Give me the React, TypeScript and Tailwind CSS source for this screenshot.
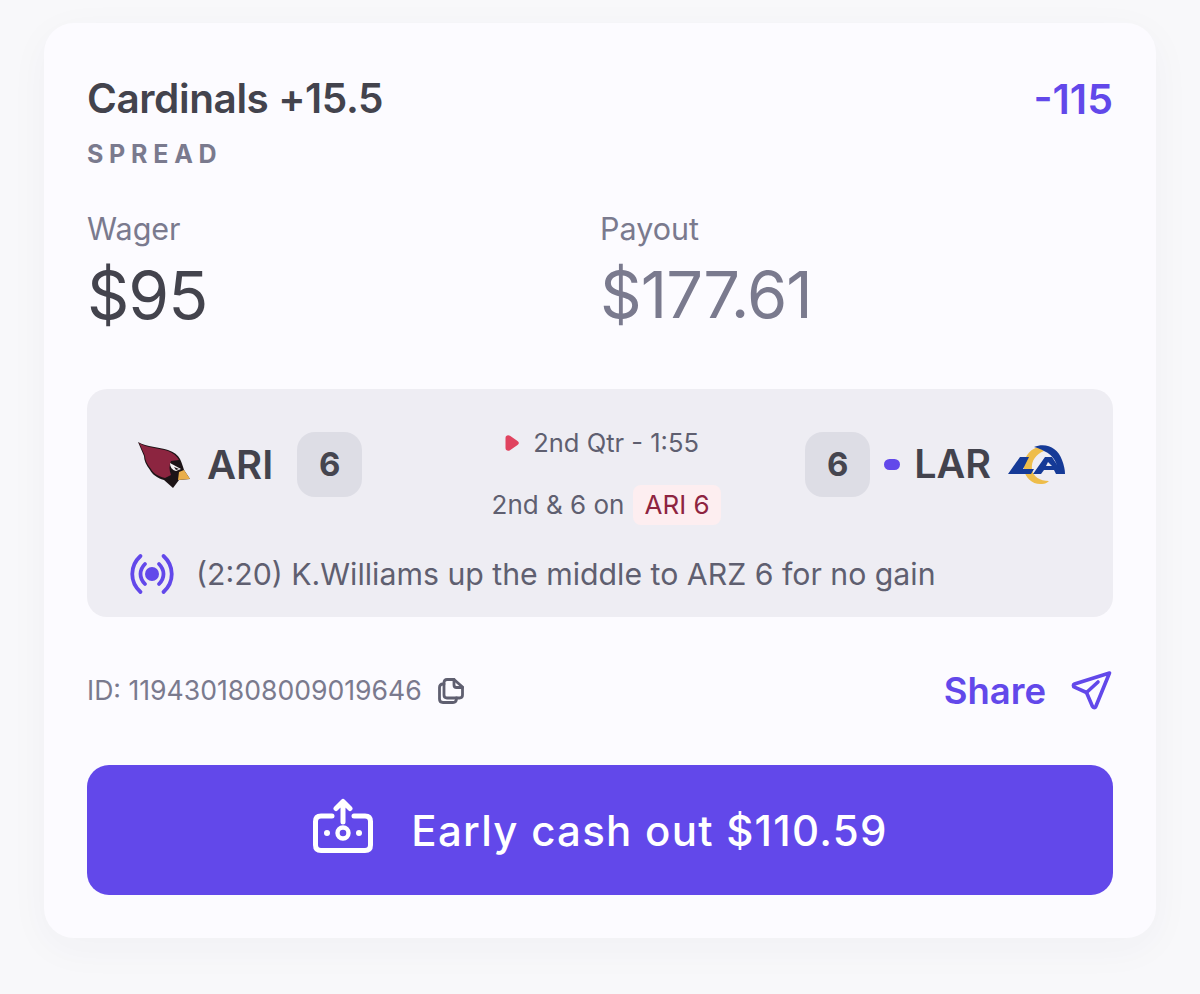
function CardinalLogo() {
  return (
    <svg width="52" height="46" viewBox="0 0 52 46" className="shrink-0">
      <path d="M0 0 C9 5 21 5 30 8 C36 10 40 13 42 17 C44 21 45 25 46 28 L52 37 L41 38 L35 46 L26 38 C19 36 14 32 12 28 C8 23 6 18 6 14 C4 9 2 5 0 0 Z" fill="#1c1416" />
      <path d="M1 1 C9 6 21 6 30 9 C35 11 39 14 41 18 L33 19 C31 23 31 28 33 33 L27 36 C19 34 15 31 13 27 C9 22 7 18 7 14 C5 9 3 5 1 1 Z" fill="#8c2540" />
      <path d="M32 21 L43 27 L38 29 C34 28 32 25 32 21 Z" fill="#f5f3f3" />
      <path d="M36 25 L41 27 L38 28 Z" fill="#1c1416" />
      <path d="M41 30 L46 28 L52 37 L40 38 Z" fill="#e9ae4b" />
    </svg>
  );
}

function RamsLogo() {
  return (
    <svg width="57" height="41" viewBox="0 0 57 41" className="shrink-0">
      <path d="M30 3 C20 6 15 15 16 25 C17 34 25 41 34 40 C37 40 39 39 41 37 C32 37 25 33 24 25 C23 17 28 10 36 7 C34 5 32 4 30 3 Z" fill="#eebd4a" />
      <path d="M26 3 C38 -2 50 4 54 16 C56 21 57 26 57 30 L50 30 C50 20 46 11 36 7 C33 5 30 4 26 3 Z" fill="#153a97" />
      <path d="M12 13 L21 13 L15 25 L26 25 L23 30 L0 30 Z" fill="#153a97" />
      <path d="M37 13 L44 13 L55 30 L48 30 L46 26 L36 26 L33 30 L25 30 Z M40 18 L38 22 L44 22 Z" fill="#153a97" fillRule="evenodd" />
    </svg>
  );
}

function BroadcastIcon() {
  return (
    <svg width="46" height="46" viewBox="0 0 46 46" fill="none" stroke="#6248ea" strokeWidth="3.8" strokeLinecap="round" className="shrink-0">
      <path d="M11.5 5 C0.5 15 0.5 31 11.5 41" />
      <path d="M34.5 5 C45.5 15 45.5 31 34.5 41" />
      <path d="M16 13 C10 19 10 27 16 33" />
      <path d="M30 13 C36 19 36 27 30 33" />
      <circle cx="23" cy="23" r="7" fill="#6248ea" stroke="none" />
    </svg>
  );
}

function CopyIcon() {
  return (
    <svg width="26" height="26" viewBox="0 0 26 26" fill="none" stroke="#5f5f70" strokeWidth="2.8" strokeLinejoin="round" strokeLinecap="round" className="shrink-0">
      <path d="M9 1.5 H16 L24.5 9 V17 C24.5 19 23 20 21.5 20 H9 C7 20 6 19 6 17 V4.5 C6 2.5 7 1.5 9 1.5 Z" />
      <path d="M16 1.5 V7 C16 8.5 17 9.5 18.5 9.5 H24.5" />
      <path d="M6 6 H5 C2.5 6 1.5 7.5 1.5 9.5 V21 C1.5 23.5 3 24.5 5 24.5 H15 C17 24.5 18.5 23 18.5 20" />
    </svg>
  );
}

function ShareIcon() {
  return (
    <svg width="42" height="42" viewBox="0 0 42 42" fill="none" stroke="#6248ea" strokeWidth="3.6" strokeLinejoin="round" strokeLinecap="round" className="shrink-0">
      <path d="M38.5 3 L3.5 14 C2 14.6 2 16.6 3.5 17.2 L15.5 22.5 L21.5 36.5 C22.2 38 24.2 38 24.8 36.5 L38.5 3 Z" />
      <path d="M15.5 22.5 L27 12" />
    </svg>
  );
}

function CashOutIcon() {
  return (
    <svg width="62" height="58" viewBox="0 0 62 58" fill="none" stroke="#ffffff" strokeWidth="5" strokeLinecap="round" strokeLinejoin="round" className="shrink-0 -mt-[6px]">
      <path d="M20 18 H9 C5.5 18 3.5 20 3.5 23.5 V47 C3.5 50.5 5.5 52.5 9 52.5 H53 C56.5 52.5 58.5 50.5 58.5 47 V23.5 C58.5 20 56.5 18 53 18 H42" />
      <path d="M31 24 V4 M24 10.5 L31 3.5 L38 10.5" />
      <circle cx="31" cy="35" r="5.5" strokeWidth="4.4" />
      <circle cx="15" cy="35" r="3" fill="#ffffff" stroke="none" />
      <circle cx="47" cy="35" r="3" fill="#ffffff" stroke="none" />
    </svg>
  );
}

function ScoreBox({ value }: { value: number }) {
  return (
    <div className="w-[65px] h-[65px] rounded-[18px] bg-[#dddde5] flex items-center justify-center text-[33px] font-bold text-[#45454f]">
      {value}
    </div>
  );
}

export default function App() {
  return (
    <div className="w-[1200px] h-[994px] bg-[#f8f8fa] pt-[23px] px-[44px] font-['Inter',sans-serif] overflow-hidden">
      <div className="h-[915px] rounded-[30px] bg-[#fcfbff] px-[43px] pt-[51px] shadow-[0_10px_40px_rgba(60,60,90,0.04)]">
        {/* Header */}
        <div className="flex justify-between">
          <div>
            <div className="text-[40.5px] leading-[50px] font-semibold text-[#43434d] tracking-[-0.4px]">Cardinals +15.5</div>
            <div className="mt-[15px] text-[25px] leading-[30px] font-bold text-[#7a7a8e] tracking-[0.23em]">SPREAD</div>
          </div>
          <div className="text-[41px] leading-[50px] font-semibold text-[#6248ea]">-115</div>
        </div>

        {/* Wager / payout */}
        <div className="mt-[42px] flex">
          <div className="w-[513px]">
            <div className="text-[30.5px] leading-[36px] text-[#7a7a8e]">Wager</div>
            <div className="mt-[12px] text-[66px] leading-[72px] text-[#43434d] tracking-[-1px]">$95</div>
          </div>
          <div>
            <div className="text-[30.5px] leading-[36px] text-[#7a7a8e]">Payout</div>
            <div className="mt-[12px] text-[65px] leading-[72px] text-[#7a7a8e] tracking-[-1px]">$177.61</div>
          </div>
        </div>

        {/* Game panel */}
        <div className="mt-[58px] h-[228px] rounded-[20px] bg-[#eeedf3] pl-[51px] pr-[48px] pt-[43px]">
          <div className="flex justify-between">
            <div className="flex items-center h-[65px] w-[269px]">
              <CardinalLogo />
              <span className="ml-[17px] text-[40px] font-semibold text-[#43434d]">ARI</span>
              <div className="ml-[24px]"><ScoreBox value={6} /></div>
            </div>
            <div className="-mt-[5px] flex flex-col items-center">
              <div className="mr-[8px] flex items-center text-[25.5px] leading-[32px] text-[#5f5f70]">
                <svg width="14" height="16" viewBox="0 0 14 16" className="mr-[14px]">
                  <path d="M0.5 3 C0.5 0.5 3 -0.5 5 0.8 L12.5 6 C14.3 7.2 14.3 8.8 12.5 10 L5 15.2 C3 16.5 0.5 15.5 0.5 13 Z" fill="#e0435f" />
                </svg>
                2nd Qtr - 1:55
              </div>
              <div className="mt-[26px] flex items-center text-[26px] leading-[32px] text-[#5f5f70]">
                2nd &amp; 6 on
                <span className="ml-[9px] px-[11px] h-[40px] flex items-center rounded-[8px] bg-[#fdeef0] text-[#8e2440]">ARI 6</span>
              </div>
            </div>
            <div className="flex items-center h-[65px]">
              <ScoreBox value={6} />
              <div className="ml-[14px] w-[16px] h-[11px] rounded-full bg-[#6248ea]" />
              <span className="ml-[14px] text-[39.5px] font-semibold text-[#43434d]">LAR</span>
              <div className="ml-[17px]"><RamsLogo /></div>
            </div>
          </div>
          <div className="mt-[26px] flex items-center -ml-[9px]">
            <BroadcastIcon />
            <span className="ml-[21px] text-[30.25px] leading-[44px] text-[#5f5f70]">(2:20) K.Williams up the middle to ARZ 6 for no gain</span>
          </div>
        </div>

        {/* Id + share */}
        <div className="mt-[50px] h-[48px] flex items-center justify-between">
          <div className="flex items-center text-[26.6px] text-[#7a7a8e]">
            ID: 1194301808009019646
            <div className="ml-[16px]"><CopyIcon /></div>
          </div>
          <div className="flex items-center">
            <span className="text-[36.5px] font-semibold text-[#6248ea]">Share</span>
            <div className="ml-[25px]"><ShareIcon /></div>
          </div>
        </div>

        {/* Cash out */}
        <div className="mt-[50px] h-[130px] rounded-[22px] bg-[#6248ea] flex items-center justify-center">
          <CashOutIcon />
          <span className="ml-[37px] text-[42px] font-[550] text-white tracking-[0.03em]">Early cash out $110.59</span>
        </div>
      </div>
    </div>
  );
}
